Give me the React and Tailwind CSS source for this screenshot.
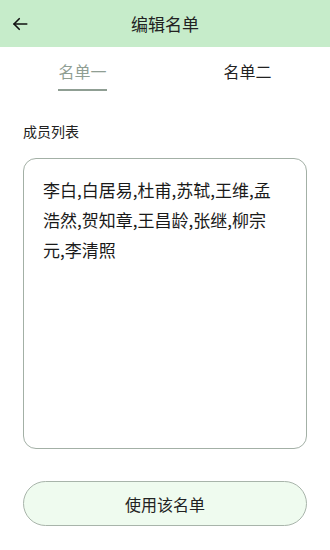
import React, { useState } from "react";

function App() {
  const [tab, setTab] = useState(0);
  const [members, setMembers] = useState("李白,白居易,杜甫,苏轼,王维,孟浩然,贺知章,王昌龄,张继,柳宗元,李清照");

  return (
    <main className="w-[330px] h-[550px] bg-white flex flex-col" style={{ fontFamily: '"Noto Sans CJK SC", "Noto Sans", sans-serif' }}>
      {/* header */}
      <header className="h-[47px] bg-[#c6ecca] relative flex items-center justify-center">
        <button className="absolute left-[11px] top-[15px] text-[#111]">
          <svg width="18" height="18" viewBox="0 0 24 24" fill="none" stroke="currentColor" strokeWidth="2.2" strokeLinecap="round" strokeLinejoin="round">
            <path d="M21 12H4" />
            <path d="M11 5l-7 7 7 7" />
          </svg>
        </button>
        <h1 className="text-[17px] text-[#222] leading-none">编辑名单</h1>
      </header>

      {/* tabs */}
      <div className="flex h-[44px]">
        <button onClick={() => setTab(0)} className="flex-1 flex justify-center">
          <span className={`mt-[15px] text-[16px] leading-[18px] pb-[6px] border-b-2 ${tab === 0 ? "text-[#8f9e93] border-[#8f9e93]" : "text-[#222] border-transparent"}`}>名单一</span>
        </button>
        <button onClick={() => setTab(1)} className="flex-1 flex justify-center">
          <span className={`mt-[15px] text-[16px] leading-[18px] pb-[6px] border-b-2 ${tab === 1 ? "text-[#8f9e93] border-[#8f9e93]" : "text-[#222] border-transparent"}`}>名单二</span>
        </button>
      </div>

      <div className="px-[23px] flex flex-col">
        <label className="mt-[32px] text-[14px] leading-[17px] text-[#222]">成员列表</label>
        <textarea
          value={members}
          onChange={(e) => setMembers(e.target.value)}
          className="mt-[18px] h-[291px] w-full resize-none rounded-[13px] border border-[#a3b0a6] pl-[19px] pr-[27px] py-[16px] text-[17px] leading-[30px] text-[#1a1a1a] outline-none"
          style={{ fontFamily: '"Noto Sans CJK SC", "Noto Sans", sans-serif' }}
        />
        <button className="mt-[32px] h-[45px] w-full rounded-full border border-[#a8b4aa] bg-[#effbef] text-[16px] text-[#222]">
          使用该名单
        </button>
      </div>
    </main>
  );
}

export default App;
